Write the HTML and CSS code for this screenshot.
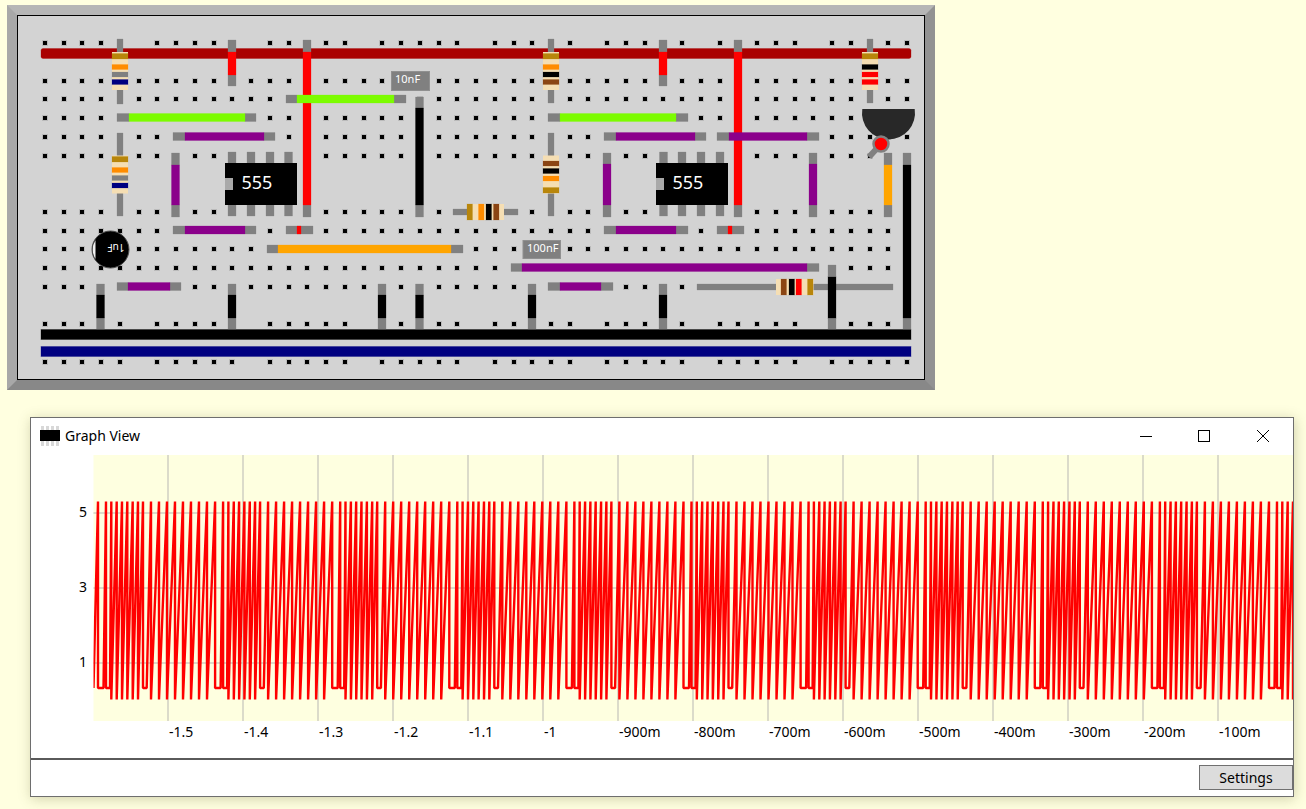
FILE: index.html
```html
<!DOCTYPE html>
<html lang="en">
<head>
<meta charset="utf-8">
<title>Circuit simulator</title>
<link rel="stylesheet" href="styles.css">
</head>
<body>
<div class="board">
<svg class="board-svg" viewBox="18 16 906 363" width="906" height="363">
  <g id="holes"></g>
  <rect class="bus bus-red" x="41" y="48.500" width="870" height="10" rx="2"/>
  <rect class="bus bus-black" x="41" y="329.500" width="870" height="10"/>
  <rect class="bus bus-blue" x="41" y="346.500" width="870" height="10"/>

  <path class="lead" d="M228 40h8v12h-8zM228 75h8v11h-8zM303 40h8v12h-8zM303 205h8v12h-8zM286 95h11v8h-11zM394 95h12v8h-12zM415.500 97h8v11h-8zM415.500 205h8v12h-8zM117 113.500h12v8h-12zM245 113.500h11v8h-11zM173 132.500h12v8h-12zM264 132.500h11v8h-11zM171.500 153h8v12h-8zM171.500 205h8v12h-8zM228 152h8v11h-8zM247 152h8v11h-8zM266 152h8v11h-8zM284.500 152h8v11h-8zM228 205h8v11h-8zM247 205h8v11h-8zM266 205h8v11h-8zM284.500 205h8v11h-8zM173 226h12v8h-12zM245 226h11v8h-11zM286 226h27v8h-27zM267 245h11v8h-11zM451 245h12v8h-12zM117 282.500h11v8h-11zM170 282.500h11v8h-11zM96.500 284h8v11h-8zM96.500 318h8v11h-8zM228 284h8v11h-8zM228 318h8v11h-8zM378 284h8v11h-8zM378 318h8v11h-8zM415.500 284h8v11h-8zM415.500 318h8v11h-8zM528 284h8v11h-8zM528 318h8v11h-8zM659 284h8v11h-8zM659 318h8v11h-8zM828 265h8v12h-8zM828 318h8v11h-8z"/>
  <path class="lead" d="M548 113.500h12v8h-12zM676 113.500h12v8h-12zM604 132.500h12v8h-12zM695 132.500h11v8h-11zM603 153h8v11h-8zM603 205h8v12h-8zM659 40h8v12h-8zM659 75h8v11h-8zM734 40h8v12h-8zM734 205h8v12h-8zM717 132.500h12v8h-12zM807 132.500h12v8h-12zM809 153h8v11h-8zM809 205h8v12h-8zM884 153h8v12h-8zM884 205h8v12h-8zM903 153h8v12h-8zM903 318h8v11h-8zM659.500 152h8v11h-8zM678 152h8v11h-8zM697 152h8v11h-8zM716 152h8v11h-8zM659.500 205h8v11h-8zM678 205h8v11h-8zM697 205h8v11h-8zM716 205h8v11h-8zM604 226h12v8h-12zM676 226h12v8h-12zM717 226h27v8h-27zM511 263.500h11v8h-11zM807 263.500h12v8h-12zM548 282.500h12v8h-12zM601 282.500h12v8h-12zM697 284h196v6h-196z"/>
  <path class="lead" d="M117 39h6v13h-6zM117 90h6v14h-6zM117 133h6v23h-6zM117 193h6v23h-6zM548 39h6v13h-6zM548 90h6v13h-6zM548 133h6v23h-6zM548 193h6v23h-6zM867 39h6v13h-6zM867 90h6v13h-6zM453 209h14v6h-14zM504 209h14v6h-14z"/>

  <path class="wire wire-red" d="M228 52h8v23h-8zM303 52h8v153h-8zM659 52h8v23h-8zM734 52h8v153h-8zM297 226h4v8h-4zM728 226h4v8h-4z"/>
  <path class="wire wire-green" d="M297 95h97v8h-97zM129 113.500h116v8h-116zM560 113.500h116v8h-116z"/>
  <path class="wire wire-black" d="M415.500 108h8v97h-8zM96.500 295h8v23h-8zM228 295h8v23h-8zM378 295h8v23h-8zM415.500 295h8v23h-8zM528 295h8v23h-8zM659 295h8v23h-8zM903 165h8v153h-8z"/>
  <path class="wire wire-purple" d="M185 132.500h79v8h-79zM171.500 165h8v40h-8zM185 226h60v8h-60zM128 282.500h42v8h-42zM616 132.500h79v8h-79zM603 164h8v41h-8zM729 132.500h78v8h-78zM809 164h8v41h-8zM616 226h60v8h-60zM522 263.500h285v8h-285zM560 282.500h41v8h-41z"/>
  <path class="wire wire-orange" d="M278 245h173v8h-173zM884 165h8v40h-8z"/>

  <rect class="body" x="112" y="52" width="16" height="38"/>
  <rect class="band band-gold" x="112" y="53.500" width="16" height="5.500"/>
  <rect class="band band-orange" x="112" y="64.500" width="16" height="5"/>
  <rect class="band band-gray" x="112" y="72" width="16" height="5"/>
  <rect class="band band-navy" x="112" y="79.500" width="16" height="5"/>

  <rect class="body" x="112" y="155.500" width="16" height="38"/>
  <rect class="band band-gold" x="112" y="156.500" width="16" height="5.500"/>
  <rect class="band band-orange" x="112" y="167.500" width="16" height="5"/>
  <rect class="band band-gray" x="112" y="175.500" width="16" height="5"/>
  <rect class="band band-navy" x="112" y="183" width="16" height="5"/>

  <rect class="body" x="543" y="52" width="16" height="38"/>
  <rect class="band band-gold" x="543" y="53.500" width="16" height="5.500"/>
  <rect class="band band-orange" x="543" y="64.500" width="16" height="5"/>
  <rect class="band band-black" x="543" y="72" width="16" height="5"/>
  <rect class="band band-brown" x="543" y="79.500" width="16" height="5"/>

  <rect class="body" x="543" y="155.500" width="16" height="38"/>
  <rect class="band band-brown" x="543" y="161" width="16" height="5"/>
  <rect class="band band-black" x="543" y="168.500" width="16" height="5"/>
  <rect class="band band-orange" x="543" y="176" width="16" height="5"/>
  <rect class="band band-gold" x="543" y="187.500" width="16" height="5.500"/>

  <rect class="body" x="862" y="52" width="16" height="38"/>
  <rect class="band band-gold" x="862" y="53.500" width="16" height="5.500"/>
  <rect class="band band-black" x="862" y="64.500" width="16" height="5"/>
  <rect class="band band-red" x="862" y="72" width="16" height="5"/>
  <rect class="band band-red" x="862" y="79.500" width="16" height="5"/>

  <rect class="body" x="467" y="204" width="37" height="16"/>
  <rect class="band band-gold" x="467" y="204" width="5.500" height="16"/>
  <rect class="band band-orange" x="478.500" y="204" width="5.500" height="16"/>
  <rect class="band band-black" x="486" y="204" width="5.500" height="16"/>
  <rect class="band band-brown" x="493.500" y="204" width="5.500" height="16"/>

  <rect class="body" x="776" y="279" width="37.500" height="16"/>
  <rect class="band band-brown" x="781" y="279" width="5.500" height="16"/>
  <rect class="band band-black" x="789" y="279" width="5.500" height="16"/>
  <rect class="band band-red" x="796" y="279" width="5.500" height="16"/>
  <rect class="band band-gold" x="807.500" y="279" width="5.500" height="16"/>
  <rect class="wire wire-black" x="828" y="277" width="8" height="41"/>

  <rect class="chip" x="225" y="163" width="72" height="42"/>
  <rect class="notch" x="225" y="178" width="8" height="12"/>
  <text class="chip-label" x="241.500" y="189">555</text>
  <rect class="chip" x="656" y="163" width="72" height="42"/>
  <rect class="notch" x="656" y="178" width="8" height="12"/>
  <text class="chip-label" x="672.500" y="189">555</text>

  <circle class="cap-round" cx="110.500" cy="249.500" r="18.500"/>
  <path class="cap-mark" d="M95.500 240A17.500 17.500 0 0 0 95.500 259Z"/>
  <text class="cap-text cap-flip" x="116" y="252" transform="rotate(180 116 248)">1uF</text>

  <rect class="cap-box" x="391.500" y="71.500" width="38" height="19"/>
  <text class="cap-text" x="395" y="83">10nF</text>
  <rect class="cap-box" x="523" y="240.500" width="37.500" height="18"/>
  <text class="cap-text" x="527" y="252">100nF</text>

  <path class="transistor" d="M862.300 109H914.700A26.500 26.500 0 1 1 862.300 109Z"/>
  <line class="led-lead" x1="881" y1="144" x2="869" y2="157"/>
  <circle class="led" cx="881" cy="144" r="7.500"/>
</svg>
</div>

<section class="window">
  <header class="titlebar">
    <svg class="app-icon" viewBox="0 0 20 20" width="20" height="20">
      <path class="app-icon-pins" d="M1 0h3v20h-3zM6 0h3v20h-3zM11 0h3v20h-3zM16 0h3v20h-3z"/>
      <rect class="app-icon-chip" x="0" y="4" width="20" height="11"/>
    </svg>
    <span class="title">Graph View</span>
    <div class="controls">
      <span class="control"><svg viewBox="0 0 14 14" width="14" height="14"><path class="glyph" d="M1 7.500h12"/></svg></span>
      <span class="control"><svg viewBox="0 0 14 14" width="14" height="14"><rect class="glyph" x="1.500" y="1.500" width="11" height="11"/></svg></span>
      <span class="control control-close"><svg viewBox="0 0 14 14" width="14" height="14"><path class="glyph" d="M1 1l12 12M13 1l-12 12"/></svg></span>
    </div>
  </header>
  <div class="chart">
    <svg class="chart-svg" viewBox="31 455 1262 303" width="1262" height="303">
      <defs><clipPath id="plot-clip"><rect x="93.500" y="455" width="1199.500" height="266"/></clipPath></defs>
      <rect class="plot" x="93.500" y="455" width="1199.500" height="266"/>
      <path class="grid" d="M168 455v266M243 455v266M318 455v266M393 455v266M468 455v266M543 455v266M618 455v266M693 455v266M768 455v266M843 455v266M918 455v266M993 455v266M1068 455v266M1143 455v266M1218 455v266M93.500 513H1293M93.500 588H1293M93.500 663H1293"/>
      <path id="trace" class="trace" clip-path="url(#plot-clip)"/>
      <text class="axis axis-y" x="87" y="517">5</text>
      <text class="axis axis-y" x="87" y="592">3</text>
      <text class="axis axis-y" x="87" y="667">1</text>
      <text class="axis" x="169" y="737">-1.5</text>
      <text class="axis" x="244" y="737">-1.4</text>
      <text class="axis" x="319" y="737">-1.3</text>
      <text class="axis" x="394" y="737">-1.2</text>
      <text class="axis" x="469" y="737">-1.1</text>
      <text class="axis" x="544" y="737">-1</text>
      <text class="axis" x="619" y="737">-900m</text>
      <text class="axis" x="694" y="737">-800m</text>
      <text class="axis" x="769" y="737">-700m</text>
      <text class="axis" x="844" y="737">-600m</text>
      <text class="axis" x="919" y="737">-500m</text>
      <text class="axis" x="994" y="737">-400m</text>
      <text class="axis" x="1069" y="737">-300m</text>
      <text class="axis" x="1144" y="737">-200m</text>
      <text class="axis" x="1219" y="737">-100m</text>
    </svg>
  </div>
  <footer class="footer">
    <button class="settings" type="button">Settings</button>
  </footer>
</section>
<script src="app.js"></script>
</body>
</html>
```
FILE: styles.css
```css
* { box-sizing: border-box; }
html, body { margin: 0; padding: 0; }
body {
  background: #ffffe0;
  width: 1306px;
  height: 809px;
  overflow: hidden;
  padding: 5px 0 0 7px;
  font-family: "Noto Sans", "Open Sans", sans-serif;
  color: #000;
}
.board {
  width: 928px;
  height: 385px;
  border-style: solid;
  border-width: 10px;
  border-color: #b6b6b6 #929292 #888888 #a8a8a8;
  background: #d3d3d3;
}
.board-svg {
  display: block;
  width: 908px;
  height: 365px;
  border: 1px solid #000;
  background: #d3d3d3;
}
.hole-halo { fill: #808080; fill-opacity: 0.3; }
.hole { fill: #000; }
.bus { stroke-width: 1; stroke-opacity: 0.3; }
.bus-red { fill: #aa0000; stroke: #aa0000; }
.bus-black { fill: #000; stroke: #000; }
.bus-blue { fill: #000080; stroke: #000080; }
.lead { fill: #808080; stroke: #808080; stroke-width: 1; stroke-opacity: 0.25; }
.wire { stroke-width: 1; stroke-opacity: 0.25; }
.wire-red { fill: #ff0000; stroke: #ff0000; }
.wire-green { fill: #7cfc00; stroke: #7cfc00; }
.wire-black { fill: #000; stroke: #000; }
.wire-purple { fill: #8b008b; stroke: #8b008b; }
.wire-orange { fill: #ffa500; stroke: #ffa500; }
.body { fill: #f5deb3; }
.band { stroke-width: 1; stroke-opacity: 0.2; }
.band-gold { fill: #b8860b; stroke: #b8860b; }
.band-orange { fill: #ff8c00; stroke: #ff8c00; }
.band-gray { fill: #808080; stroke: #808080; }
.band-navy { fill: #000080; stroke: #000080; }
.band-black { fill: #000; stroke: #000; }
.band-brown { fill: #8b4513; stroke: #8b4513; }
.band-red { fill: #ff0000; stroke: #ff0000; }
.chip { fill: #000; }
.notch { fill: #a9a9a9; }
.chip-label { fill: #fff; font-size: 18px; }
.cap-round { fill: #000; stroke: #505050; stroke-width: 1; }
.cap-mark { fill: #f0f0f0; }
.cap-text { fill: #fff; font-size: 11px; }
.cap-flip { font-size: 10px; text-anchor: middle; }
.cap-box { fill: #808080; stroke: #909090; stroke-width: 1; }
.transistor { fill: #282828; }
.led-lead { stroke: #808080; stroke-width: 6; }
.led { fill: #ff0000; stroke: #808080; stroke-width: 2.500; }

.window {
  margin: 27px 0 0 23px;
  width: 1264px;
  height: 380px;
  border: 1px solid #6e6e6e;
  background: #fff;
  display: flex;
  flex-direction: column;
  box-shadow: 1px 2px 12px rgba(90, 90, 40, 0.28);
}
.titlebar {
  height: 37px;
  flex: none;
  display: flex;
  align-items: center;
  padding: 0 0 2px 9px;
}
.app-icon { display: block; flex: none; margin-right: 5px; }
.app-icon-pins { fill: #d8d8d8; }
.app-icon-chip { fill: #000; }
.title { font-size: 14px; line-height: 20px; }
.controls { margin-left: auto; display: flex; }
.control { width: 58px; height: 35px; display: flex; align-items: center; justify-content: center; }
.control-close { width: 60px; }
.control svg { display: block; }
.glyph { fill: none; stroke: #000; stroke-width: 1; }
.chart { height: 303px; flex: none; }
.chart-svg { display: block; }
.plot { fill: #feffe0; }
.grid { fill: none; stroke: #cfcfc2; stroke-width: 1.500; }
.trace { fill: none; stroke: #ff0000; stroke-width: 2.400; stroke-linejoin: bevel; }
.axis { font-size: 14px; fill: #000; }
.axis-y { text-anchor: end; }
.footer {
  flex: 1;
  border-top: 2px solid #5a5a5a;
  display: flex;
  justify-content: flex-end;
  align-items: flex-start;
  padding-top: 5px;
}
.settings {
  width: 94px;
  height: 25px;
  padding: 0;
  background: #dcdcdc;
  border: 1px solid #707070;
  border-radius: 0;
  font: 14px/20px "Noto Sans", "Open Sans", sans-serif;
  color: #000;
}
```
FILE: app.js
```js
(function () {
  var NS = "http://www.w3.org/2000/svg";

  // Breadboard holes: 47 columns, grouped in fives on the power-rail rows.
  var holes = document.getElementById("holes");
  var rows = [0, 2, 3, 4, 5, 6, 9, 10, 11, 12, 13, 15, 17];
  var railRows = [0, 15, 17];
  function square(cls, x, y, size) {
    var r = document.createElementNS(NS, "rect");
    r.setAttribute("class", cls);
    r.setAttribute("x", x);
    r.setAttribute("y", y);
    r.setAttribute("width", size);
    r.setAttribute("height", size);
    holes.appendChild(r);
  }
  rows.forEach(function (row) {
    for (var c = 0; c < 47; c++) {
      if (railRows.indexOf(row) >= 0 && c % 6 === 5) continue;
      var x = Math.round(45 + 18.74 * c - 2);
      var y = Math.round(43 + 18.75 * row - 2);
      square("hole-halo", x - 1, y - 1, 6);
      square("hole", x, y, 4);
    }
  });

  // Scope trace: a repeating sawtooth with two plateaus per period.
  var TOP = 501.5, MID = 688, LOW = 699.5, PERIOD = 117.1;
  var d = ["M93.5 " + MID];
  function to(x, y) { d.push("L" + x.toFixed(1) + " " + y); }
  function tooth(x, bottom) { to(x, TOP); to(x, bottom); }
  for (var b = 98; b < 1300; b += PERIOD) {
    tooth(b, MID);
    to(b + 5.5, MID);
    tooth(b + 8, MID);
    to(b + 12, MID);
    [13.3, 18.7, 24, 29.3, 34.7, 40].forEach(function (o) { tooth(b + o, LOW); });
    tooth(b + 45, MID);
    to(b + 48.7, MID);
    [53, 61, 69, 77, 85, 93, 101, 109].forEach(function (o) { tooth(b + o, LOW); });
  }
  document.getElementById("trace").setAttribute("d", d.join(""));
})();
```
